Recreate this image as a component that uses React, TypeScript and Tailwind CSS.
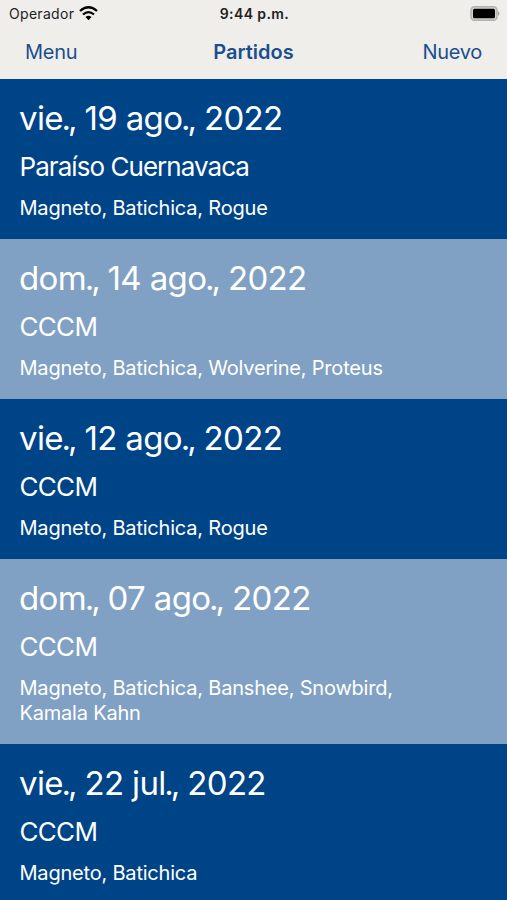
const dark = 'bg-[#004488]';
const light = 'bg-[#80a1c4]';

const matches = [
  { date: ['vie', '19 ago', '2022'], place: 'Paraíso Cuernavaca', players: 'Magneto, Batichica, Rogue', tone: dark, spacing: 'tracking-[-0.95px]' },
  { date: ['dom', '14 ago', '2022'], place: 'CCCM', players: 'Magneto, Batichica, Wolverine, Proteus', tone: light, spacing: 'tracking-[-0.7px]' },
  { date: ['vie', '12 ago', '2022'], place: 'CCCM', players: 'Magneto, Batichica, Rogue', tone: dark, spacing: 'tracking-[-0.7px]' },
  { date: ['dom', '07 ago', '2022'], place: 'CCCM', players: 'Magneto, Batichica, Banshee, Snowbird, Kamala Kahn', tone: light, spacing: 'tracking-[-0.7px]' },
  { date: ['vie', '22 jul', '2022'], place: 'CCCM', players: 'Magneto, Batichica', tone: dark, spacing: 'tracking-[-0.7px]' },
];

function DateTitle({ parts }: { parts: string[] }) {
  return (
    <h2 className="-ml-px whitespace-nowrap text-[33px] leading-10 tracking-[-0.65px]">
      {parts.map((part, i) =>
        i < parts.length - 1 ? (
          <span key={part}>
            {part.slice(0, -1)}
            <span className="tracking-[-2px]">{part.slice(-1)}</span>
            <span className="tracking-[-3px]">.</span>
            <span className="tracking-[-1.7px]">,</span>{' '}
          </span>
        ) : (
          <span key={part}>{part}</span>
        ),
      )}
    </h2>
  );
}

export default function App() {
  return (
    <div className="h-[900px] w-[507px] overflow-hidden bg-[#efeeeb] font-['Inter',sans-serif]">
      <header className="h-[79px]">
        <div className="grid h-[27px] grid-cols-3 items-center pr-[7px] pl-[9px] text-[14px] text-[#222]">
          <div className="flex items-center gap-[5px]">
            <span className="tracking-[0.3px]">Operador</span>
            <svg width="19" height="15" viewBox="0 0 19 15" fill="none" stroke="#000" strokeWidth="2.3">
              <path d="M1 5Q9.5-2.4 18 5M4 8.5Q9.5 3.8 15 8.5" />
              <path d="M6.5 11Q9.5 8.4 12.5 11L9.5 14.2Z" fill="#000" stroke="none" />
            </svg>
          </div>
          <div className="text-center font-semibold tracking-[0.4px]">9:44 p.m.</div>
          <svg className="justify-self-end" width="30" height="15" viewBox="0 0 30 15">
            <rect x="1" y="0.75" width="26" height="13.5" rx="3.5" fill="#d4d3d0" stroke="#b2b1ae" strokeWidth="1.5" />
            <rect x="3" y="2.75" width="22" height="9.5" rx="1.5" />
            <path d="M28 5Q31 7.5 28 10Z" fill="#aaa9a6" />
          </svg>
        </div>
        <nav className="grid grid-cols-3 items-center px-[25px] pt-[11px] text-xl leading-7 text-[#1a4f8e]">
          <span className="tracking-[-0.3px]">Menu</span>
          <span className="text-center font-semibold">Partidos</span>
          <span className="text-right tracking-[-0.3px]">Nuevo</span>
        </nav>
      </header>
      <main>
        {matches.map((m) => (
          <section key={m.date.join()} className={`${m.tone} px-5 pt-[19px] pb-[18px] text-white`}>
            <DateTitle parts={m.date} />
            <p className={`-ml-[0.5px] mt-[13px] text-[26px] leading-8 ${m.spacing}`}>{m.place}</p>
            <p className="-ml-[0.5px] mt-[13px] w-[400px] text-[20px] leading-[25px] tracking-[-0.2px]">{m.players}</p>
          </section>
        ))}
      </main>
    </div>
  );
}
